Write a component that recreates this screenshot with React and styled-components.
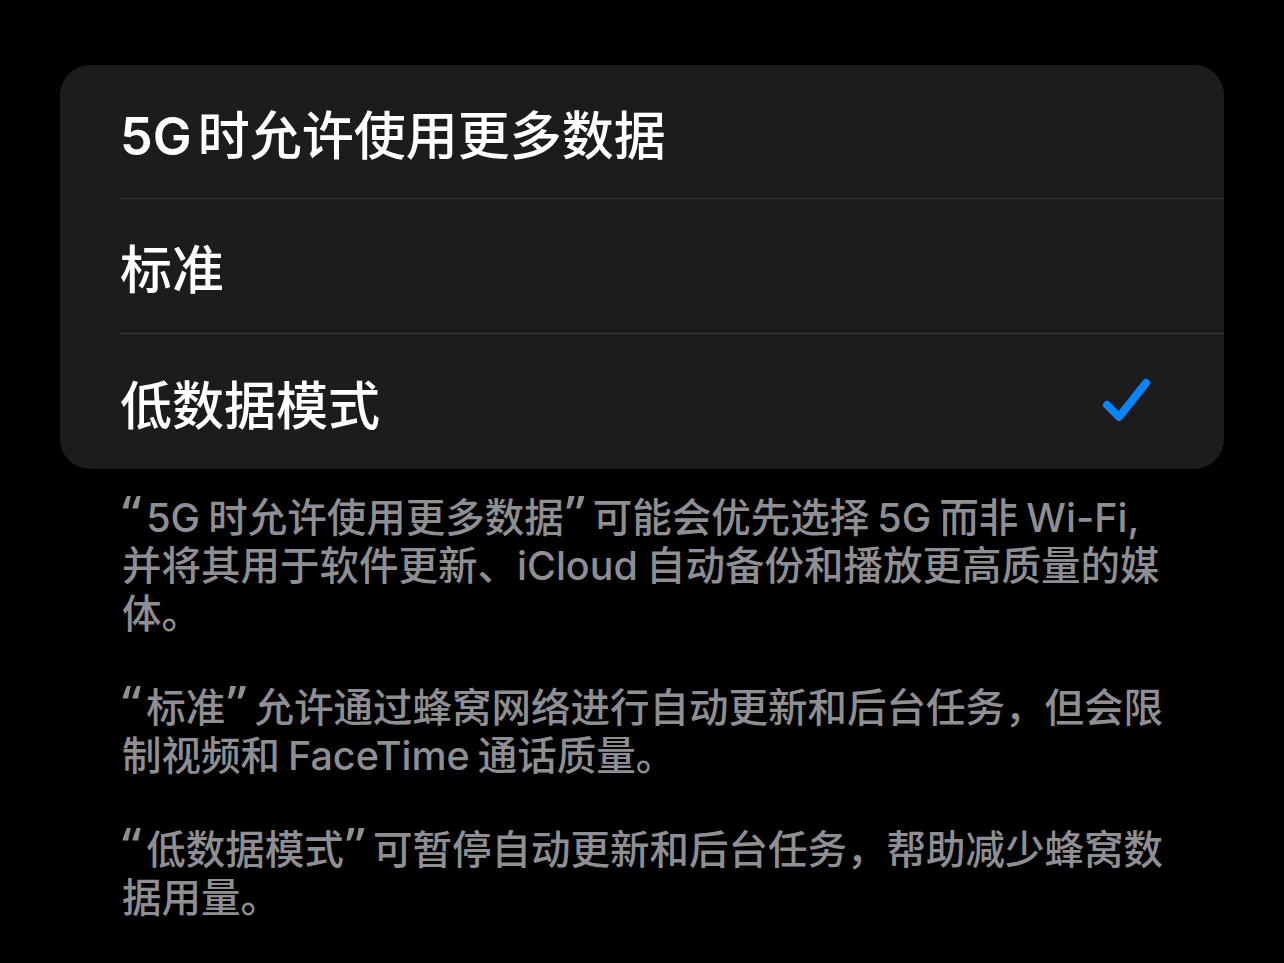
import React from "react";
import styled, { createGlobalStyle } from "styled-components";

const Global = createGlobalStyle`
  html, body { margin: 0; padding: 0; background: #000; }
  body { font-family: "Noto Sans CJK SC", "Noto Sans", sans-serif; -webkit-font-smoothing: antialiased; }
`;

const Page = styled.div`
  width: 1284px;
  height: 963px;
  background: #000;
  padding: 65px 60px 0 60px;
  box-sizing: border-box;
  overflow: hidden;
`;

const Card = styled.div`
  background: #1c1c1e;
  border-radius: 30px;
  overflow: hidden;
  display: flex;
  flex-direction: column;
`;

const Row = styled.div`
  margin-left: 60px;
  height: ${(p) => p.$h}px;
  display: flex;
  align-items: center;
  justify-content: space-between;
  padding-right: 72px;
  box-sizing: border-box;
  border-bottom: ${(p) => (p.$last ? "none" : "1.5px solid #38383a")};
`;

const Label = styled.span`
  color: #fff;
  font-size: 52px;
  font-weight: 500;
  line-height: 1;
  margin-top: 2px;
  white-space: nowrap;
`;

const Latin = styled.span`
  font-family: Inter, "Noto Sans", sans-serif;
  font-weight: ${(p) => p.$w || 400};
  line-height: 0;
  margin-left: ${(p) => (p.$l ? p.$gap : 0)}px;
  margin-right: ${(p) => (p.$r ? p.$gap : 0)}px;
`;

const Quote = styled.span`
  font-family: "Noto Sans", sans-serif;
  font-size: 50px;
  line-height: 0;
  margin-left: ${(p) => (p.$open ? 0 : 2)}px;
  margin-right: ${(p) => (p.$open ? 5 : 8)}px;
`;

const Check = styled.svg`
  width: 50px;
  height: 48px;
  display: block;
`;

const Footer = styled.div`
  margin: 22px 0 0 62px;
  display: flex;
  flex-direction: column;
  gap: 46px;
`;

const Para = styled.p`
  margin: 0;
  color: #8e8e93;
  font-size: 39.5px;
  line-height: 48px;
  font-weight: 500;
  white-space: nowrap;
`;

const Line = styled.span`
  display: block;
  height: 48px;
`;

const needsGap = (c) => !!c && /[\u3400-\u9fff]/.test(c);

function Rich({ text, gap = 7, weight }) {
  const parts = [];
  const re = /([“”])|([A-Za-z0-9][A-Za-z0-9\-,]*)|([^“”A-Za-z0-9]+)/g;
  let m;
  let k = 0;
  while ((m = re.exec(text))) {
    const start = m.index;
    const end = start + m[0].length;
    if (m[1]) {
      parts.push(
        <Quote key={k++} $open={m[1] === "“"}>
          {m[1]}
        </Quote>
      );
    } else if (m[2]) {
      parts.push(
        <Latin
          key={k++}
          $w={weight}
          $gap={gap}
          $l={needsGap(text[start - 1])}
          $r={needsGap(text[end])}
        >
          {m[2]}
        </Latin>
      );
    } else {
      parts.push(<React.Fragment key={k++}>{m[3]}</React.Fragment>);
    }
  }
  return <>{parts}</>;
}

const rows = [
  { label: "5G时允许使用更多数据", h: 134 },
  { label: "标准", h: 135 },
  { label: "低数据模式", h: 135, checked: true, last: true },
];

const paras = [
  [
    "“5G时允许使用更多数据”可能会优先选择5G而非Wi-Fi,",
    "并将其用于软件更新、iCloud自动备份和播放更高质量的媒",
    "体。",
  ],
  [
    "“标准”允许通过蜂窝网络进行自动更新和后台任务，但会限",
    "制视频和FaceTime通话质量。",
  ],
  [
    "“低数据模式”可暂停自动更新和后台任务，帮助减少蜂窝数",
    "据用量。",
  ],
];

export default function App() {
  return (
    <Page>
      <Global />
      <Card>
        {rows.map((r) => (
          <Row key={r.label} $h={r.h} $last={r.last}>
            <Label>
              <Rich text={r.label} gap={6} weight={600} />
            </Label>
            {r.checked && (
              <Check viewBox="0 0 50 48">
                <path
                  d="M5 27 L17 39 L44 5"
                  fill="none"
                  stroke="#0a84ff"
                  strokeWidth="8"
                  strokeLinecap="round"
                  strokeLinejoin="round"
                />
              </Check>
            )}
          </Row>
        ))}
      </Card>
      <Footer>
        {paras.map((p, i) => (
          <Para key={i}>
            {p.map((l) => (
              <Line key={l}>
                <Rich text={l} gap={8} weight={500} />
              </Line>
            ))}
          </Para>
        ))}
      </Footer>
    </Page>
  );
}
